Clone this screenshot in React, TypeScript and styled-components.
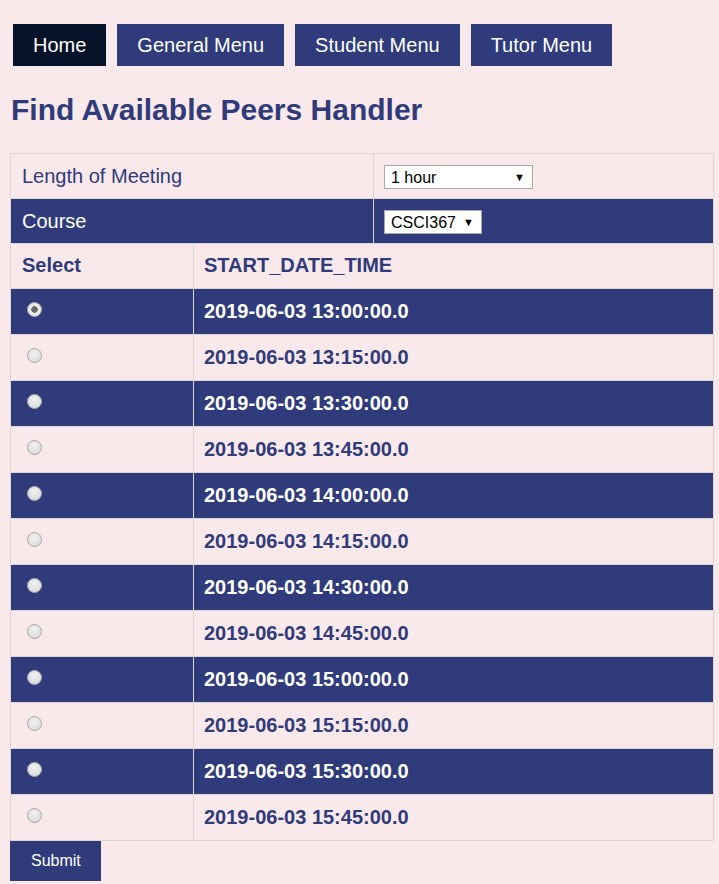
import React, { useState } from "react";
import styled, { createGlobalStyle } from "styled-components";

const NAVY = "#2f3b7b";
const DARK = "#061229";
const BG = "#fae9ea";
const LINE = "#dcd6d7";

const GlobalStyle = createGlobalStyle`
  html, body {
    margin: 0;
    padding: 0;
    background: ${BG};
    font-family: "Liberation Sans", Arial, sans-serif;
  }
`;

const Page = styled.div`
  padding: 24px 5px 0 10px;
  width: 704px;
`;

const Nav = styled.nav`
  display: flex;
  gap: 11px;
  margin-left: 3px;
`;

const NavButton = styled.a<{ $active?: boolean }>`
  display: block;
  height: 42px;
  box-sizing: border-box;
  padding: 10px 20px;
  line-height: 22px;
  font-size: 20px;
  color: #fff;
  text-decoration: none;
  background: ${(p) => (p.$active ? DARK : NAVY)};
`;

const Title = styled.h1`
  margin: 27px 0 26px 1px;
  font-size: 30px;
  line-height: 34px;
  font-weight: bold;
  color: ${NAVY};
`;

const Table = styled.table<{ $noTop?: boolean }>`
  width: 704px;
  border-collapse: collapse;
  ${(p) => (p.$noTop ? "border-top: hidden;" : "")}
`;

const Row = styled.tr<{ $dark?: boolean }>`
  background: ${(p) => (p.$dark ? NAVY : "transparent")};
  color: ${(p) => (p.$dark ? "#fff" : NAVY)};
`;

const Cell = styled.td<{ $h: number; $w?: number; $bold?: boolean }>`
  border: 1px solid ${LINE};
  height: ${(p) => p.$h}px;
  width: ${(p) => (p.$w ? `${p.$w}px` : "auto")};
  padding: 0 10px 0 11px;
  box-sizing: border-box;
  font-size: 20px;
  font-weight: ${(p) => (p.$bold ? "bold" : "normal")};
  vertical-align: middle;
`;

const ValueCell = styled(Cell)`
  padding-left: 10px;
`;

const HeadCell = styled.th<{ $w?: number; $pl?: number }>`
  border: 1px solid ${LINE};
  height: 44px;
  width: ${(p) => (p.$w ? `${p.$w}px` : "auto")};
  padding: 0 10px 0 ${(p) => p.$pl ?? 11}px;
  box-sizing: border-box;
  font-size: 20px;
  font-weight: bold;
  text-align: left;
  vertical-align: middle;
`;

const SelectBox = styled.span<{ $w: number }>`
  position: relative;
  display: inline-flex;
  align-items: center;
  width: ${(p) => p.$w}px;
  height: 24px;
  box-sizing: border-box;
  border: 1px solid #a9a9a9;
  background: #fff;
  margin-top: 2px;
`;

const NativeSelect = styled.select`
  appearance: none;
  -webkit-appearance: none;
  border: none;
  outline: none;
  background: transparent;
  width: 100%;
  height: 100%;
  padding: 0 0 0 6px;
  font-family: "Liberation Sans", Arial, sans-serif;
  font-size: 16px;
  color: #000;
`;

const Arrow = styled.span`
  position: absolute;
  right: 7px;
  top: 5px;
  font-size: 11px;
  color: #000;
  pointer-events: none;
`;

const Radio = styled.input`
  appearance: none;
  -webkit-appearance: none;
  width: 15px;
  height: 15px;
  margin: 0 0 5px 5px;
  border-radius: 50%;
  border: 1px solid #a8a8a8;
  background: radial-gradient(circle at 50% 35%, #f2f2f2, #d6d6d6);
  box-sizing: border-box;
  vertical-align: middle;
  display: inline-block;
  &:checked {
    background: radial-gradient(circle, #6a6a6a 0 3px, #f0f0f0 3.6px, #d9d9d9 100%);
  }
`;

const SubmitButton = styled.button`
  display: block;
  height: 40px;
  padding: 0 20px 0 21px;
  border: none;
  background: ${NAVY};
  color: #fff;
  font-family: "Liberation Sans", Arial, sans-serif;
  font-size: 16px;
`;

const times = [
  "13:00", "13:15", "13:30", "13:45",
  "14:00", "14:15", "14:30", "14:45",
  "15:00", "15:15", "15:30", "15:45",
];

export default function App() {
  const [sel, setSel] = useState(0);
  return (
    <>
      <GlobalStyle />
      <Page>
        <Nav>
          <NavButton $active href="#">Home</NavButton>
          <NavButton href="#">General Menu</NavButton>
          <NavButton href="#">Student Menu</NavButton>
          <NavButton href="#">Tutor Menu</NavButton>
        </Nav>
        <Title>Find Available Peers Handler</Title>
        <form onSubmit={(e) => e.preventDefault()}>
          <Table>
            <tbody>
              <Row>
                <Cell $h={45} $w={363}>Length of Meeting</Cell>
                <ValueCell $h={45}>
                  <SelectBox $w={149}>
                    <NativeSelect defaultValue="1 hour">
                      <option>1 hour</option>
                      <option>30 minutes</option>
                      <option>2 hours</option>
                    </NativeSelect>
                    <Arrow>▼</Arrow>
                  </SelectBox>
                </ValueCell>
              </Row>
              <Row $dark>
                <Cell $h={45} $w={363}>Course</Cell>
                <ValueCell $h={45}>
                  <SelectBox $w={98}>
                    <NativeSelect defaultValue="CSCI367">
                      <option>CSCI367</option>
                    </NativeSelect>
                    <Arrow>▼</Arrow>
                  </SelectBox>
                </ValueCell>
              </Row>
            </tbody>
          </Table>
          <Table $noTop>
            <thead>
              <Row>
                <HeadCell $w={183}>Select</HeadCell>
                <HeadCell $pl={10}>START_DATE_TIME</HeadCell>
              </Row>
            </thead>
            <tbody>
              {times.map((t, i) => (
                <Row key={t} $dark={i % 2 === 0}>
                  <Cell $h={46} $w={183}>
                    <Radio
                      type="radio"
                      name="slot"
                      checked={sel === i}
                      onChange={() => setSel(i)}
                    />
                  </Cell>
                  <ValueCell $h={46} $bold>2019-06-03 {t}:00.0</ValueCell>
                </Row>
              ))}
            </tbody>
          </Table>
          <SubmitButton type="submit">Submit</SubmitButton>
        </form>
      </Page>
    </>
  );
}
